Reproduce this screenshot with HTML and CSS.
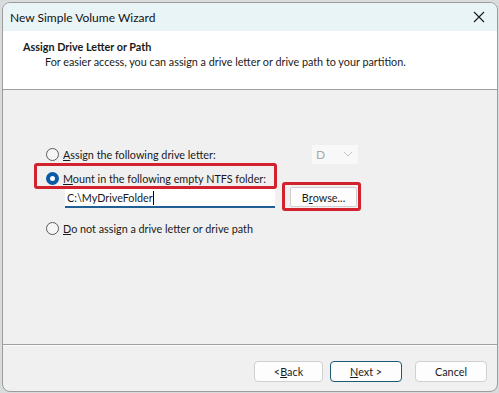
FILE: index.html
```html
<!DOCTYPE html>
<html>
<head>
<meta charset="utf-8">
<link rel="stylesheet" href="styles.css">
</head>
<body>
<div class="window">
  <div class="titlebar">
    <span class="title">New Simple Volume Wizard</span>
    <svg class="close" width="12" height="12" viewBox="0 0 12 12"><path d="M1 1 L11 11 M11 1 L1 11" stroke="#1a1a1a" stroke-width="1.1" fill="none"/></svg>
  </div>
  <div class="header">
    <div class="h-title">Assign Drive Letter or Path</div>
    <div class="h-sub">For easier access, you can assign a drive letter or drive path to your partition.</div>
  </div>
  <div class="content">
    <div class="row row1">
      <label class="choice"><span class="radio"></span><span><u>A</u>ssign the following drive letter:</span></label>
      <div class="combo"><span>D</span><svg width="10" height="6" viewBox="0 0 10 6"><path d="M1 1 L5 5 L9 1" stroke="#c4c4c4" stroke-width="1" fill="none"/></svg></div>
    </div>
    <div class="row row2">
      <label class="choice"><span class="radio checked"></span><span><u>M</u>ount in the following empty NTFS folder:</span></label>
    </div>
    <div class="row fieldrow">
      <div class="field">C:\MyDriveFolder<span class="caret"></span></div>
      <div class="btn browse">B<u>r</u>owse...</div>
    </div>
    <div class="row row3">
      <label class="choice"><span class="radio"></span><span><u>D</u>o not assign a drive letter or drive path</span></label>
    </div>
    <div class="mark mark1"></div>
    <div class="mark mark2"></div>
  </div>
  <div class="footer">
    <div class="btn">&lt; <u>B</u>ack</div>
    <div class="btn default"><u>N</u>ext &gt;</div>
    <div class="btn cancel">Cancel</div>
  </div>
</div>
</body>
</html>
```
FILE: styles.css
```css
html, body {
  margin: 0;
  padding: 0;
}
body {
  width: 499px;
  height: 393px;
  background: #d8dcdc;
  font-family: "Lato", "Noto Sans", sans-serif;
  font-size: 10.8px;
  color: #1a1a1a;
  overflow: hidden;
}
.window {
  margin: 2px 0 0 2px;
  width: 494px;
  height: 388px;
  border: 1px solid #9c9c9c;
  border-radius: 8px;
  overflow: hidden;
  background: #f0f0f0;
  display: flex;
  flex-direction: column;
}
.titlebar {
  height: 28px;
  background: #e9f4f7;
  display: flex;
  align-items: center;
  justify-content: space-between;
  padding: 0 12px 0 7px;
  flex: none;
}
.title {
  font-size: 12px;
  color: #111;
}
.close {
  display: block;
}
.header {
  height: 59px;
  background: #ffffff;
  border-bottom: 1px solid #a0a0a0;
  box-sizing: border-box;
  padding: 8px 0 0 20px;
  flex: none;
}
.h-title {
  font-weight: bold;
  font-size: 10.8px;
  line-height: 15px;
}
.h-sub {
  padding-left: 22px;
  line-height: 15px;
}
.content {
  position: relative;
  height: 255px;
  box-sizing: border-box;
  padding: 54px 0 0 43px;
  border-bottom: 1px solid #a0a0a0;
  flex: none;
}
.row {
  display: flex;
  align-items: center;
}
.row1 {
  height: 20px;
}
.row2 {
  height: 20px;
  margin-top: 4px;
}
.row3 {
  height: 20px;
  margin-top: 10px;
}
.choice {
  display: flex;
  align-items: center;
  width: 266px;
  white-space: nowrap;
}
.radio {
  width: 11px;
  height: 11px;
  border: 1px solid #5a5a5a;
  border-radius: 50%;
  background: #f6f6f6;
  margin-right: 4px;
  flex: none;
  box-sizing: content-box;
}
.radio.checked {
  background: #ffffff;
  border: 4px solid #0a5aa8;
  width: 5px;
  height: 5px;
}
.combo {
  width: 46px;
  height: 19px;
  box-sizing: border-box;
  background: #f8f8f8;
  display: flex;
  align-items: center;
  justify-content: space-between;
  padding: 0 5px 0 4px;
  color: #a8a8a8;
  font-size: 12px;
}
.fieldrow {
  height: 20px;
  padding-left: 19px;
}
.field {
  width: 210px;
  height: 20px;
  box-sizing: border-box;
  background: #ffffff;
  border-bottom: 2px solid #1f5f93;
  padding: 1px 0 0 2px;
  white-space: nowrap;
  display: flex;
  align-items: center;
}
.caret {
  display: inline-block;
  width: 1px;
  height: 14px;
  background: #000;
}
.btn {
  height: 21px;
  box-sizing: border-box;
  background: #fdfdfd;
  border: 1px solid #d0d0d0;
  border-radius: 4px;
  display: flex;
  align-items: center;
  justify-content: center;
  width: 69px;
}
.browse {
  width: 67px;
  height: 20px;
  margin-left: 15px;
  margin-top: -2px;
  border-radius: 2px;
  border-color: #cfcfcf;
}
.mark {
  position: absolute;
  border: 3.5px solid #d1222d;
  border-radius: 3px;
  box-sizing: border-box;
}
.mark1 {
  left: 31px;
  top: 73px;
  width: 243px;
  height: 26px;
}
.mark2 {
  left: 279px;
  top: 92px;
  width: 79px;
  height: 29px;
}
.footer {
  flex: 1;
  display: flex;
  justify-content: flex-end;
  align-items: flex-start;
  padding: 15px 10px 0 0;
  gap: 7px;
  border-top: 1px solid #fbfbfb;
}
.btn.default {
  border-color: #1d5a73;
  width: 72px;
}
.btn.cancel {
  margin-left: 6px;
  width: 72px;
}
u {
  text-decoration: underline;
  text-underline-offset: 1px;
}
```
